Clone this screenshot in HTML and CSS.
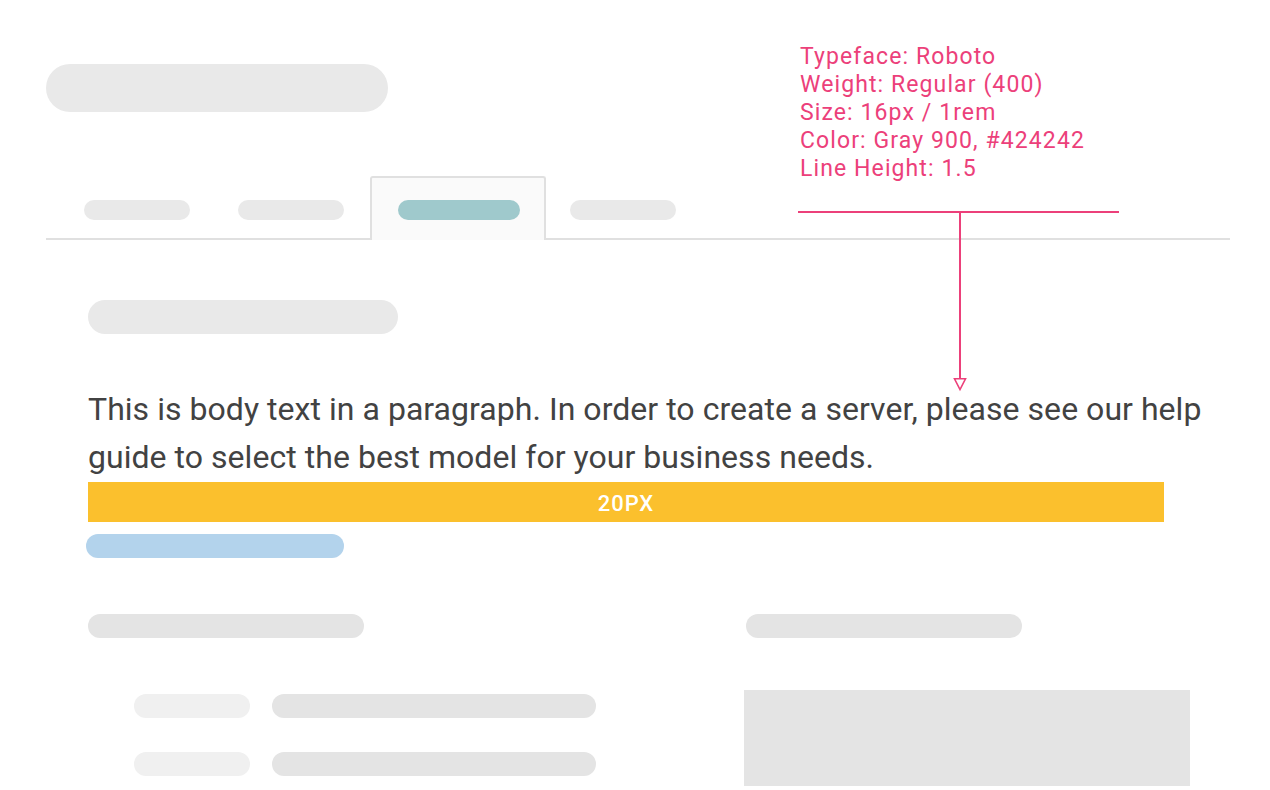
FILE: index.html
```html
<!DOCTYPE html>
<html lang="en">
<head>
<meta charset="utf-8">
<title>Body text spec</title>
<link rel="stylesheet" href="styles.css">
</head>
<body>
<div class="page">
  <div class="title-pill"></div>

  <div class="tabs">
    <div class="tab"><span class="tab-pill"></span></div>
    <div class="tab"><span class="tab-pill"></span></div>
    <div class="tab tab-active"><span class="tab-pill tab-pill-active"></span></div>
    <div class="tab"><span class="tab-pill"></span></div>
  </div>

  <div class="content">
    <div class="heading-pill"></div>
    <p class="body-text">This is body text in a paragraph. In order to create a server, please see our help guide to select the best model for your business needs.</p>
    <div class="spacing-bar">20PX</div>
    <div class="link-pill"></div>

    <div class="columns">
      <div class="col-left">
        <div class="sub-pill"></div>
        <div class="rows">
          <div class="row"><span class="label-pill"></span><span class="value-pill"></span></div>
          <div class="row"><span class="label-pill"></span><span class="value-pill"></span></div>
        </div>
      </div>
      <div class="col-right">
        <div class="sub-pill sub-pill-right"></div>
        <div class="image-box"></div>
      </div>
    </div>
  </div>

  <div class="annotation">
    <div class="annotation-text">
      <div>Typeface: Roboto</div>
      <div>Weight: Regular (400)</div>
      <div>Size: 16px / 1rem</div>
      <div>Color: Gray 900, #424242</div>
      <div>Line Height: 1.5</div>
    </div>
  </div>
  <svg class="annotation-arrow" width="324" height="184" viewBox="0 0 324 184">
    <line x1="0" y1="2" x2="321" y2="2" stroke="#ec407a" stroke-width="2"/>
    <line x1="162" y1="2" x2="162" y2="168" stroke="#ec407a" stroke-width="2"/>
    <polygon points="156.5,168.8 167.5,168.8 162,179.5" fill="#ffffff" stroke="#ec407a" stroke-width="1.6"/>
  </svg>
</div>
</body>
</html>
```

FILE: styles.css
```css
* { box-sizing: border-box; }

html, body {
  margin: 0;
  padding: 0;
  background: #ffffff;
  font-family: Roboto, "Liberation Sans", sans-serif;
}

.page {
  position: relative;
  width: 1270px;
  height: 790px;
  overflow: hidden;
  padding: 64px 40px 0 46px;
}

.title-pill {
  width: 342px;
  height: 48px;
  border-radius: 24px;
  background: #e9e9e9;
}

.tabs {
  display: flex;
  margin-top: 64px;
  height: 64px;
  padding-left: 14px;
  border-bottom: 2px solid #e0e0e0;
}

.tab {
  height: 64px;
  margin-bottom: -2px;
  padding: 22px 22px 0;
  border: 2px solid transparent;
  border-bottom: 0;
  display: flex;
  align-items: flex-start;
}

.tab-active {
  margin-left: 2px;
  padding: 22px 24px 0 26px;
  background: #fafafa;
  border-color: #e0e0e0;
  border-radius: 3px 3px 0 0;
}

.tab-pill {
  display: block;
  width: 106px;
  height: 20px;
  border-radius: 10px;
  background: #e9e9e9;
}

.tab-pill-active {
  width: 122px;
  background: #9fc9cc;
}

.content {
  padding-left: 42px;
  padding-top: 60px;
}

.heading-pill {
  width: 310px;
  height: 34px;
  border-radius: 17px;
  background: #e9e9e9;
}

.body-text {
  margin: 51px 0 0;
  font-size: 32px;
  line-height: 48px;
  letter-spacing: 0.04px;
  color: #424242;
  font-weight: 400;
}

.spacing-bar {
  width: 1076px;
  height: 40px;
  margin-top: 1px;
  padding-top: 2px;
  background: #fbc02d;
  color: #ffffff;
  font-weight: 500;
  font-size: 22px;
  letter-spacing: 1px;
  display: flex;
  align-items: center;
  justify-content: center;
}

.link-pill {
  width: 258px;
  height: 24px;
  margin-top: 12px;
  margin-left: -2px;
  border-radius: 12px;
  background: #b3d3ec;
}

.columns {
  display: grid;
  grid-template-columns: 656px 446px;
  margin-top: 56px;
}

.sub-pill {
  width: 276px;
  height: 24px;
  border-radius: 12px;
  background: #e4e4e4;
}

.sub-pill-right {
  margin-left: 2px;
}

.rows {
  margin-top: 56px;
  padding-left: 46px;
  display: flex;
  flex-direction: column;
  gap: 34px;
}

.row {
  display: flex;
  gap: 22px;
}

.label-pill {
  display: block;
  width: 116px;
  height: 24px;
  border-radius: 12px;
  background: #f0f0f0;
}

.value-pill {
  display: block;
  width: 324px;
  height: 24px;
  border-radius: 12px;
  background: #e4e4e4;
}

.image-box {
  margin-top: 52px;
  width: 446px;
  height: 96px;
  background: #e4e4e4;
}

.annotation {
  position: absolute;
  left: 800px;
  top: 43px;
}

.annotation-text {
  color: #ec407a;
  font-size: 23px;
  line-height: 28px;
  letter-spacing: 1.1px;
}

.annotation-arrow {
  position: absolute;
  left: 798px;
  top: 210px;
}
```
